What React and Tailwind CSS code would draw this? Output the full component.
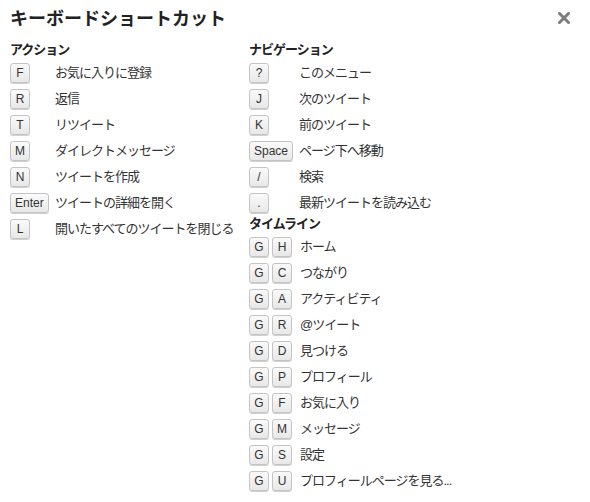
// KEYBOARD SHORTCUTS DIALOG
// two columns of shortcut rows: key caps on the left, label on the right

const ACTIONS = [
  [['F'], 'お気に入りに登録'],
  [['R'], '返信'],
  [['T'], 'リツイート'],
  [['M'], 'ダイレクトメッセージ'],
  [['N'], 'ツイートを作成'],
  [['Enter'], 'ツイートの詳細を開く'],
  [['L'], '開いたすべてのツイートを閉じる'],
]

const NAVIGATION = [
  [['?'], 'このメニュー'],
  [['J'], '次のツイート'],
  [['K'], '前のツイート'],
  [['Space'], 'ページ下へ移動'],
  [['/'], '検索'],
  [['.'], '最新ツイートを読み込む'],
]

const TIMELINE = [
  [['G', 'H'], 'ホーム'],
  [['G', 'C'], 'つながり'],
  [['G', 'A'], 'アクティビティ'],
  [['G', 'R'], '@ツイート'],
  [['G', 'D'], '見つける'],
  [['G', 'P'], 'プロフィール'],
  [['G', 'F'], 'お気に入り'],
  [['G', 'M'], 'メッセージ'],
  [['G', 'S'], '設定'],
  [['G', 'U'], 'プロフィールページを見る...'],
]

const JP = { fontFamily: '"Helvetica Neue", Arial, "Noto Sans CJK JP", sans-serif' }

function Key({ label }) {
  return (
    <span
      className="h-[20px] min-w-[20px] px-[4px] flex items-center justify-center rounded-[3px] border border-[#c4c4c4] bg-gradient-to-b from-[#fafafa] to-[#e8e8e8] shadow-[0_1px_0_#d0d0d0] text-[12px] text-[#333] leading-none"
      style={{ fontFamily: '"Liberation Sans", Arial, sans-serif' }}
    >
      {label}
    </span>
  )
}

function ShortcutRow({ keys, label, keyWidth }) {
  return (
    <div className="flex items-center h-[20px] mb-[6px]">
      <div className="flex gap-[3px] shrink-0" style={{ width: keyWidth }}>
        {keys.map((k, i) => <Key key={i} label={k} />)}
      </div>
      <span className="text-[13px] tracking-[-1px] text-[#333] whitespace-nowrap leading-[20px]">{label}</span>
    </div>
  )
}

function Heading({ children, className = '' }) {
  return (
    <div className={`h-[18px] leading-[18px] text-[13px] tracking-[-1px] font-bold text-[#222] mb-[4px] ${className}`}>
      {children}
    </div>
  )
}

export default function App() {
  return (
    <div className="w-[590px] h-[502px] bg-white px-[10px] overflow-hidden" style={JP}>
      <div className="flex items-center justify-between h-[38px]">
        <h1 className="text-[18px] font-bold text-[#222] leading-[38px]">キーボードショートカット</h1>
        <svg width="12" height="12" viewBox="0 0 12 12" className="mr-[10px] mt-[-3px]">
          <path d="M1.5 1.5 L10.5 10.5 M10.5 1.5 L1.5 10.5" stroke="#7d7d7d" strokeWidth="3" strokeLinecap="square" />
        </svg>
      </div>

      <div className="flex mt-[3px]">
        <div className="w-[239px] shrink-0">
          <Heading>アクション</Heading>
          {ACTIONS.map(([keys, label], i) => (
            <ShortcutRow key={i} keys={keys} label={label} keyWidth={45} />
          ))}
        </div>

        <div className="flex-1">
          <Heading>ナビゲーション</Heading>
          {NAVIGATION.map(([keys, label], i) => (
            <ShortcutRow key={i} keys={keys} label={label} keyWidth={50} />
          ))}
          <Heading className="mt-[-4px]">タイムライン</Heading>
          {TIMELINE.map(([keys, label], i) => (
            <ShortcutRow key={i} keys={keys} label={label} keyWidth={51} />
          ))}
        </div>
      </div>
    </div>
  )
}
